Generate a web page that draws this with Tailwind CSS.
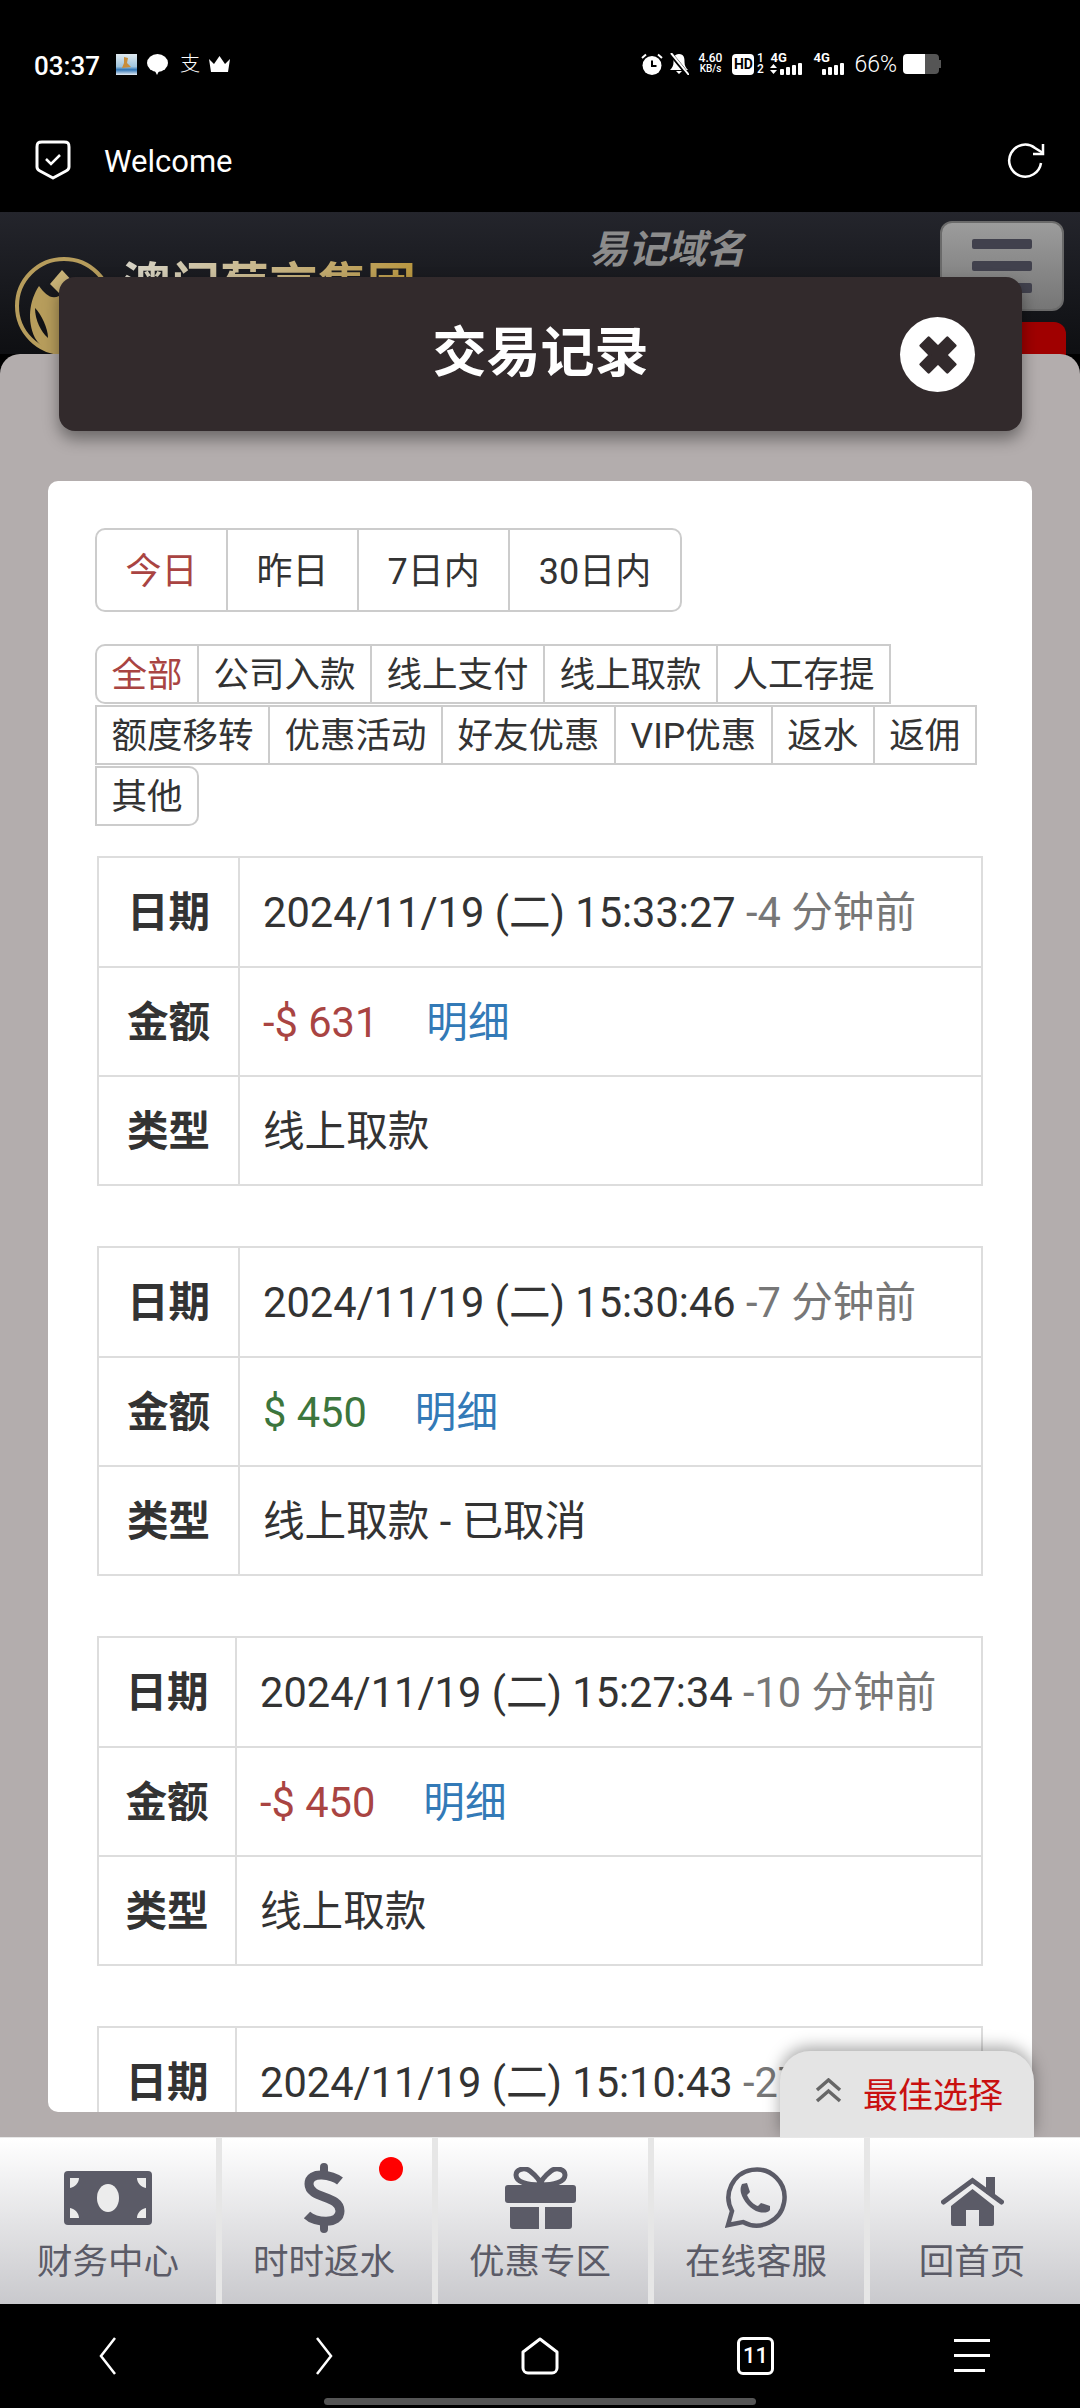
<!DOCTYPE html>
<html lang="zh-CN">
<head>
    <meta charset="UTF-8">
    <title>交易记录</title>
    <script src="https://cdn.jsdelivr.net/npm/@tailwindcss/browser@4"></script>
</head>
<body class="bg-black">
<div class="w-[1080px] h-[2408px] flex flex-col overflow-hidden font-['Roboto','Noto_Sans_CJK_SC',sans-serif] text-[#333]">

    <!-- system status + browser bar -->
    <div class="h-[212px] shrink-0 bg-black text-white pt-[50px]">
        <div class="h-[28px] pl-[34px] pr-[138px] flex items-center justify-between">
            <div class="flex items-center">
                <span class="w-[82px] text-[26px] font-medium leading-none mt-[4px]">03:37</span>
                <svg class="w-[21px] h-[21px]" viewBox="0 0 21 21">
                    <defs><linearGradient id="app" x1="0" y1="0" x2="0" y2="1"><stop offset="0" stop-color="#dfe9ef"/><stop offset="0.6" stop-color="#9fc4dc"/><stop offset="0.75" stop-color="#2f74b5"/><stop offset="1" stop-color="#e8eef4"/></linearGradient></defs>
                    <rect width="21" height="21" fill="url(#app)"/>
                    <path d="M8 3 L12 4 L11 9 L15 13 L6 14 L8 9Z" fill="#c98d3a"/>
                </svg>
                <svg class="w-[21px] h-[21px] ml-[10px]" viewBox="0 0 21 21"><ellipse cx="10.5" cy="9" rx="10.5" ry="9" fill="#fff"/><path d="M7 15 L10 21 L13 15Z" fill="#fff"/></svg>
                <span class="w-[20px] ml-[12px] text-[20px] leading-none font-light">支</span>
                <svg class="w-[21px] h-[16px] ml-[9px]" viewBox="0 0 21 16"><path d="M0 3 L5 8 L10.5 0 L16 8 L21 3 L19 16 H2Z" fill="#fff"/></svg>
            </div>
            <div class="flex items-center">
                <svg class="w-[22px] h-[22px]" viewBox="0 0 22 22">
                    <circle cx="11" cy="12.5" r="9.5" fill="#fff"/>
                    <path d="M11 7.5 V13 H15.5" stroke="#000" stroke-width="2" fill="none"/>
                    <path d="M1 5 L5 1.5 M21 5 L17 1.5" stroke="#fff" stroke-width="2"/>
                </svg>
                <svg class="w-[20px] h-[22px] ml-[6px]" viewBox="0 0 20 22">
                    <path d="M10 1 C5 1 4.500 5 4.500 9 C4.500 13 3 15 1 17 H19 C17 15 15.500 13 15.500 9 C15.500 5 15 1 10 1Z M7 18 H13 L10 21Z" fill="#fff"/>
                    <path d="M1 0 L19 22" stroke="#000" stroke-width="4"/>
                    <path d="M2 0 L20 22" stroke="#fff" stroke-width="2"/>
                </svg>
                <div class="w-[24px] ml-[9px] flex flex-col items-center font-medium mt-[-3px]">
                    <span class="text-[12px] leading-[12px]">4.60</span>
                    <span class="text-[10px] leading-[10px]">KB/s</span>
                </div>
                <div class="w-[22px] h-[21px] ml-[10px] rounded-[4px] bg-white text-black text-[14px] font-bold flex items-center justify-center leading-none">HD</div>
                <div class="w-[8px] ml-[2px] flex flex-col items-center text-[12px] font-medium leading-[11px]"><span>1</span><span>2</span></div>
                <div class="w-[35px] ml-[6px] flex flex-col mt-[-2px]">
                    <span class="text-[13px] font-bold leading-[11px]">4G</span>
                    <svg class="w-[35px] h-[12px]" viewBox="0 0 35 12">
                        <path d="M0 5 L3.500 1 L7 5Z M0 7 H7 L3.500 11Z" fill="#fff"/>
                        <rect x="10" y="6" width="4" height="6" rx="1" fill="#fff"/><rect x="16" y="4" width="4" height="8" rx="1" fill="#fff"/><rect x="22" y="2" width="4" height="10" rx="1" fill="#fff"/><rect x="28" y="0" width="4" height="12" rx="1" fill="#fff"/>
                    </svg>
                </div>
                <div class="w-[35px] ml-[8px] flex flex-col mt-[-2px]">
                    <span class="text-[13px] font-bold leading-[11px]">4G</span>
                    <svg class="w-[35px] h-[12px]" viewBox="0 0 35 12">
                        <rect x="9" y="6" width="4" height="6" rx="1" fill="#fff"/><rect x="15" y="4" width="4" height="8" rx="1" fill="#fff"/><rect x="21" y="2" width="4" height="10" rx="1" fill="#fff"/><rect x="27" y="0" width="4" height="12" rx="1" fill="#fff"/>
                    </svg>
                </div>
                <span class="ml-[6px] text-[23px] font-light leading-none">66%</span>
                <div class="ml-[6px] w-[39px] h-[20px] flex items-center">
                    <div class="w-[22px] h-[20px] bg-white rounded-l-[4px]"></div>
                    <div class="w-[14px] h-[20px] bg-[#555] rounded-r-[4px]"></div>
                    <div class="w-[2px] h-[8px] bg-[#555]"></div>
                </div>
            </div>
        </div>
        <div class="mt-[62px] h-[40px] pl-[35px] pr-[35px] flex items-center justify-between">
            <div class="flex items-center">
                <svg class="w-[36px] h-[40px]" viewBox="0 0 36 40" fill="none" stroke="#fff">
                    <path d="M2 7 C2 3 3 2 7 2 H29 C33 2 34 3 34 7 V27 C34 29 33 30 31 31 L18 38 L5 31 C3 30 2 29 2 27Z" stroke-width="3" stroke-linejoin="round"/>
                    <path d="M11 19 L16 24 L25 15" stroke-width="2.500"/>
                </svg>
                <span class="ml-[33px] text-[31px] leading-none mt-[2px]">Welcome</span>
            </div>
            <svg class="w-[38px] h-[38px] mt-[2px]" viewBox="0 0 38 38" fill="none" stroke="#fff" stroke-width="2.500">
                <path d="M34 21 A16 16 0 1 1 28 6 L36 11"/>
                <path d="M36 2 V12 H26"/>
            </svg>
        </div>
    </div>

    <!-- page under the dialog -->
    <div class="relative flex-1 overflow-hidden">
        <div class="h-[142px] flex items-start relative bg-gradient-to-b from-[#24252c] to-[#0e0f12]">
            <svg class="w-[100px] h-[100px] ml-[15px] mt-[44px] shrink-0" viewBox="0 0 100 100">
                <circle cx="49" cy="50" r="47" fill="none" stroke="#b79d5c" stroke-width="4"/>
                <path d="M24 30 C14 45 12 65 20 82 C26 92 34 97 44 97 V40 C36 44 30 38 24 30Z" fill="#b79d5c"/>
                <path d="M20 52 C26 58 33 72 33 82 C26 76 20 64 20 52Z" fill="#111216"/>
                <path d="M47 14 L60 28 L47 40 L35 28Z" fill="#c9b377"/>
            </svg>
            <span class="ml-[7px] mt-[45px] text-[49px] leading-[60px] font-bold whitespace-nowrap bg-gradient-to-r from-[#d6d3c6] to-[#b8963f] bg-clip-text text-transparent">澳门葡京集团</span>
            <span class="ml-[173px] mt-[15px] text-[39px] leading-[46px] font-bold italic text-[#8c8c8c] whitespace-nowrap">易记域名</span>
            <div class="ml-[195px] mt-[9px] w-[124px] h-[90px] shrink-0 rounded-[12px] border-2 border-[#6a6a6a] bg-gradient-to-b from-[#9c9c9c] to-[#767676] flex flex-col items-center gap-[12px] pt-[16px]">
                <div class="w-[60px] h-[10px] rounded-[2px] bg-[#41414d]"></div>
                <div class="w-[60px] h-[10px] rounded-[2px] bg-[#41414d]"></div>
                <div class="w-[60px] h-[10px] rounded-[2px] bg-[#41414d]"></div>
            </div>
            <div class="absolute right-[14px] top-[110px] w-[80px] h-[40px] rounded-t-[12px] bg-[#a00000]"></div>
        </div>

        <!-- dialog -->
        <div class="absolute top-[142px] left-0 right-0 bottom-0 rounded-t-[20px] bg-[#b3adad] pt-[127px] px-[48px] pb-[25px] flex flex-col">
            <div id="card" class="flex-1 overflow-hidden rounded-[10px] bg-white pt-[47px] px-[47px]">
                <div class="inline-flex h-[84px] text-[36px] rounded-[10px]">
                    <span class="px-[28.5px] pt-[3px] flex items-center border-2 border-[#ccc] rounded-l-[10px] text-[#a94442]">今日</span>
                    <span class="px-[28.5px] pt-[3px] flex items-center border-2 border-[#ccc] ml-[-2px]">昨日</span>
                    <span class="px-[28.5px] pt-[3px] flex items-center border-2 border-[#ccc] ml-[-2px]">7日内</span>
                    <span class="px-[28.5px] pt-[3px] flex items-center border-2 border-[#ccc] ml-[-2px] rounded-r-[10px]">30日内</span>
                </div>
                <div class="mt-[32px] flex flex-wrap gap-y-[1px] text-[35.5px] leading-[58px] pr-[2px]">
                    <span class="h-[60px] px-[14.5px] border-2 border-[#ccc] mr-[-2px] rounded-l-[10px] text-[#a94442]">全部</span>
                    <span class="h-[60px] px-[14.5px] border-2 border-[#ccc] mr-[-2px]">公司入款</span>
                    <span class="h-[60px] px-[14.5px] border-2 border-[#ccc] mr-[-2px]">线上支付</span>
                    <span class="h-[60px] px-[14.5px] border-2 border-[#ccc] mr-[-2px]">线上取款</span>
                    <span class="h-[60px] px-[14.5px] border-2 border-[#ccc] mr-[-2px]">人工存提</span>
                    <span class="h-[60px] px-[14.5px] border-2 border-[#ccc] mr-[-2px]">额度移转</span>
                    <span class="h-[60px] px-[14.5px] border-2 border-[#ccc] mr-[-2px]">优惠活动</span>
                    <span class="h-[60px] px-[14.5px] border-2 border-[#ccc] mr-[-2px]">好友优惠</span>
                    <span class="h-[60px] px-[14.5px] border-2 border-[#ccc] mr-[-2px]">VIP优惠</span>
                    <span class="h-[60px] px-[14.5px] border-2 border-[#ccc] mr-[-2px]">返水</span>
                    <span class="h-[60px] px-[14.5px] border-2 border-[#ccc] mr-[-2px]">返佣</span>
                    <span class="h-[60px] px-[14.5px] border-2 border-[#ccc] mr-[-2px] rounded-r-[10px]">其他</span>
                </div>
                <div id="records" class="mt-[30px] ml-[2px]"></div>
            </div>
            <div class="absolute right-[46px] bottom-0 w-[254px] h-[86px] rounded-t-[30px] bg-[#e4e4e4] shadow-[0_-4px_16px_rgba(0,0,0,0.35)] flex items-start pl-[35px] pt-[27px]">
                <svg class="w-[27px] h-[25px]" viewBox="0 0 27 25" fill="none" stroke="#666" stroke-width="3.500">
                    <path d="M2 12 L13.500 2 L25 12"/>
                    <path d="M2 23 L13.500 13 L25 23"/>
                </svg>
                <span class="ml-[21px] mt-[1px] text-[35px] text-[#c91010] leading-[36px]">最佳选择</span>
            </div>
        </div>

        <!-- title bar -->
        <div class="absolute top-[65px] left-[59px] w-[963px] h-[154px] rounded-[16px] bg-[#322a2c] shadow-[0_8px_16px_rgba(0,0,0,0.4)] flex items-center justify-center">
            <span class="text-[54px] font-bold text-white leading-none">交易记录</span>
            <div class="absolute left-[841px] top-[40px] w-[75px] h-[75px] rounded-full bg-white flex items-center justify-center">
                <svg class="w-[40px] h-[40px]" viewBox="5 5 30 30"><path d="M7 13 L13 7 L20 14 L27 7 L33 13 L26 20 L33 27 L27 33 L20 26 L13 33 L7 27 L14 20Z" fill="#322a2c" stroke="#322a2c" stroke-width="2" stroke-linejoin="round"/></svg>
            </div>
        </div>
    </div>

    <!-- site tab bar -->
    <div class="h-[167px] shrink-0 bg-[#e6e6e6] border-t-1 border-[#e8e8e8] grid grid-cols-5 text-[35.5px] leading-none text-[#5b5b67]">
        <div class="relative flex flex-col items-center bg-gradient-to-b from-white to-[#c9c9cd]">
            <div class="h-[107px] flex items-center pt-[12px]">
                <svg class="w-[88px] h-[54px]" viewBox="0 0 88 54">
                    <rect width="88" height="54" rx="4" fill="#5b5b67"/>
                    <ellipse cx="44" cy="27" rx="11" ry="14" fill="#ececec"/>
                    <path d="M6 7 H15 C15 12 11 16 6 17Z M82 7 H73 C73 12 77 16 82 17Z M6 47 H15 C15 42 11 38 6 37Z M82 47 H73 C73 42 77 38 82 37Z" fill="#ececec"/>
                </svg>
            </div>
            <span>财务中心</span>
        </div>
        <div class="relative flex flex-col items-center border-l-[6px] border-[#e6e6e6] pr-[6px] bg-gradient-to-b from-white to-[#c9c9cd]">
            <div class="h-[107px] flex items-center pt-[12px]">
                <svg class="w-[42px] h-[70px]" viewBox="0 0 42 70">
                    <path d="M21 0 A4 4 0 0 1 25 4 V12 H17 V4 A4 4 0 0 1 21 0Z M17 58 H25 V66 A4 4 0 0 1 17 66Z" fill="#5b5b67"/>
                    <path d="M37 18 C30 12 6 7 6 21 C6 36 37 32 37 48 C37 62 12 60 4 52" fill="none" stroke="#5b5b67" stroke-width="9"/>
                </svg>
            </div>
            <span>时时返水</span>
            <div class="absolute left-[157px] top-[19px] w-[24px] h-[24px] rounded-full bg-[#ff0000]"></div>
        </div>
        <div class="flex flex-col items-center border-l-[6px] border-[#e6e6e6] pr-[6px] bg-gradient-to-b from-white to-[#c9c9cd]">
            <div class="h-[107px] flex items-center pt-[12px]">
                <svg class="w-[71px] h-[62px]" viewBox="0 0 71 62">
                    <path d="M35.500 18 C22 18 11 15 11 8 C11 2 20 0 25 4 C30 8 35.500 14 35.500 18 C35.500 14 41 8 46 4 C51 0 60 2 60 8 C60 15 49 18 35.500 18Z" fill="none" stroke="#5b5b67" stroke-width="5"/>
                    <rect y="18" width="71" height="18" rx="3" fill="#5b5b67"/>
                    <path d="M5 40 H34 V62 H8 A3 3 0 0 1 5 59Z M40 40 H67 V59 A3 3 0 0 1 64 62 H40Z" fill="#5b5b67"/>
                </svg>
            </div>
            <span>优惠专区</span>
        </div>
        <div class="flex flex-col items-center border-l-[6px] border-[#e6e6e6] pr-[6px] bg-gradient-to-b from-white to-[#c9c9cd]">
            <div class="h-[107px] flex items-center pt-[12px]">
                <svg class="w-[62px] h-[62px]" viewBox="0 0 62 62">
                    <path d="M3 58 L7 44 A28 28 0 1 1 18 55Z" fill="none" stroke="#5b5b67" stroke-width="4.500" stroke-linejoin="miter"/>
                    <path d="M17 17 L22 16 L25 25 L22 28 C24 33 29 38 33 39 L36 36 L45 39 L45 43 C43 46 38 46 34 45 C26 43 18 34 16 26 C15 22 16 19 17 17Z" fill="#5b5b67"/>
                </svg>
            </div>
            <span>在线客服</span>
        </div>
        <div class="flex flex-col items-center border-l-[6px] border-[#e6e6e6] pr-[6px] bg-gradient-to-b from-white to-[#c9c9cd]">
            <div class="h-[107px] flex items-center pt-[20px]">
                <svg class="w-[63px] h-[49px]" viewBox="0 0 63 49">
                    <path d="M2.500 25 L31.500 3.500 L60.500 25" fill="none" stroke="#5b5b67" stroke-width="5" stroke-linecap="round"/>
                    <rect x="45" y="0" width="9" height="17" fill="#5b5b67"/>
                    <path d="M10 29 L31.500 12 L53 29 V47 A2 2 0 0 1 51 49 H38 V33 H25 V49 H12 A2 2 0 0 1 10 47Z" fill="#5b5b67"/>
                </svg>
            </div>
            <span>回首页</span>
        </div>
    </div>

    <!-- browser nav -->
    <div class="h-[104px] shrink-0 bg-black flex flex-col">
        <div class="h-[94px] relative text-white">
            <div class="h-[71px] pt-[33px] flex items-start">
                <svg class="ml-[99px] w-[18px] h-[38px]" viewBox="0 0 18 38" fill="none" stroke="#fff" stroke-width="2.500"><path d="M16 1 L2 19 L16 37"/></svg>
                <svg class="ml-[198px] w-[18px] h-[38px]" viewBox="0 0 18 38" fill="none" stroke="#fff" stroke-width="2.500"><path d="M2 1 L16 19 L2 37"/></svg>
                <svg class="ml-[188px] w-[38px] h-[38px]" viewBox="0 0 38 38" fill="none" stroke="#fff" stroke-width="3"><path d="M2 15 L19 2 L36 15 V31 A5 5 0 0 1 31 36 H7 A5 5 0 0 1 2 31Z" stroke-linejoin="round"/></svg>
                <div class="ml-[178px] w-[37px] h-[38px] rounded-[6px] border-[3px] border-white flex items-center justify-center text-[22px] font-medium leading-none">11</div>
                <div class="ml-[180px] w-[36px] h-[38px] pt-[2px] flex flex-col gap-[12px]">
                    <div class="w-[36px] h-[3px] bg-white"></div>
                    <div class="w-[36px] h-[3px] bg-white"></div>
                    <div class="w-[31px] h-[3px] bg-white"></div>
                </div>
            </div>
        </div>
        <div class="mx-auto w-[432px] h-[7px] rounded-full bg-[#555]"></div>
    </div>
</div>

<script>
    // 交易记录列表，最后一条只露出第一行
    const records = [
        { date: "2024/11/19 (二) 15:33:27", ago: "-4 分钟前", amount: "-$ 631", cls: "text-[#a94442]", type: "线上取款", col: "w-[141px]" },
        { date: "2024/11/19 (二) 15:30:46", ago: "-7 分钟前", amount: "$ 450", cls: "text-[#3c763d]", type: "线上取款 - 已取消", col: "w-[141px]" },
        { date: "2024/11/19 (二) 15:27:34", ago: "-10 分钟前", amount: "-$ 450", cls: "text-[#a94442]", type: "线上取款", col: "w-[138px]" },
        { date: "2024/11/19 (二) 15:10:43", ago: "-27 分钟前", col: "w-[138px]" }
    ];

    document.getElementById('records').innerHTML = records.map(r =>
        `<table class="w-[886px] mb-[60px] border-collapse text-[41.6px] table-fixed">
            <tr class="h-[110px]">
                <th class="${r.col} border-2 border-[#ddd] pt-[3px] font-bold text-center">日期</th>
                <td class="border-2 border-[#ddd] pl-[23px] pt-[3px] whitespace-nowrap">${r.date} <span class="text-[#777]">${r.ago}</span></td>
            </tr>
            ${r.type ? `<tr class="h-[109px]">
                <th class="border-2 border-[#ddd] pt-[3px] font-bold text-center">金额</th>
                <td class="border-2 border-[#ddd] pl-[23px] pt-[3px]"><span class="${r.cls}">${r.amount}</span><a class="ml-[48px] text-[#337ab7]">明细</a></td>
            </tr>
            <tr class="h-[109px]">
                <th class="border-2 border-[#ddd] pt-[3px] font-bold text-center">类型</th>
                <td class="border-2 border-[#ddd] pl-[23px] pt-[3px]">${r.type}</td>
            </tr>` : ''}
        </table>`
    ).join('');
</script>
</body>
</html>
